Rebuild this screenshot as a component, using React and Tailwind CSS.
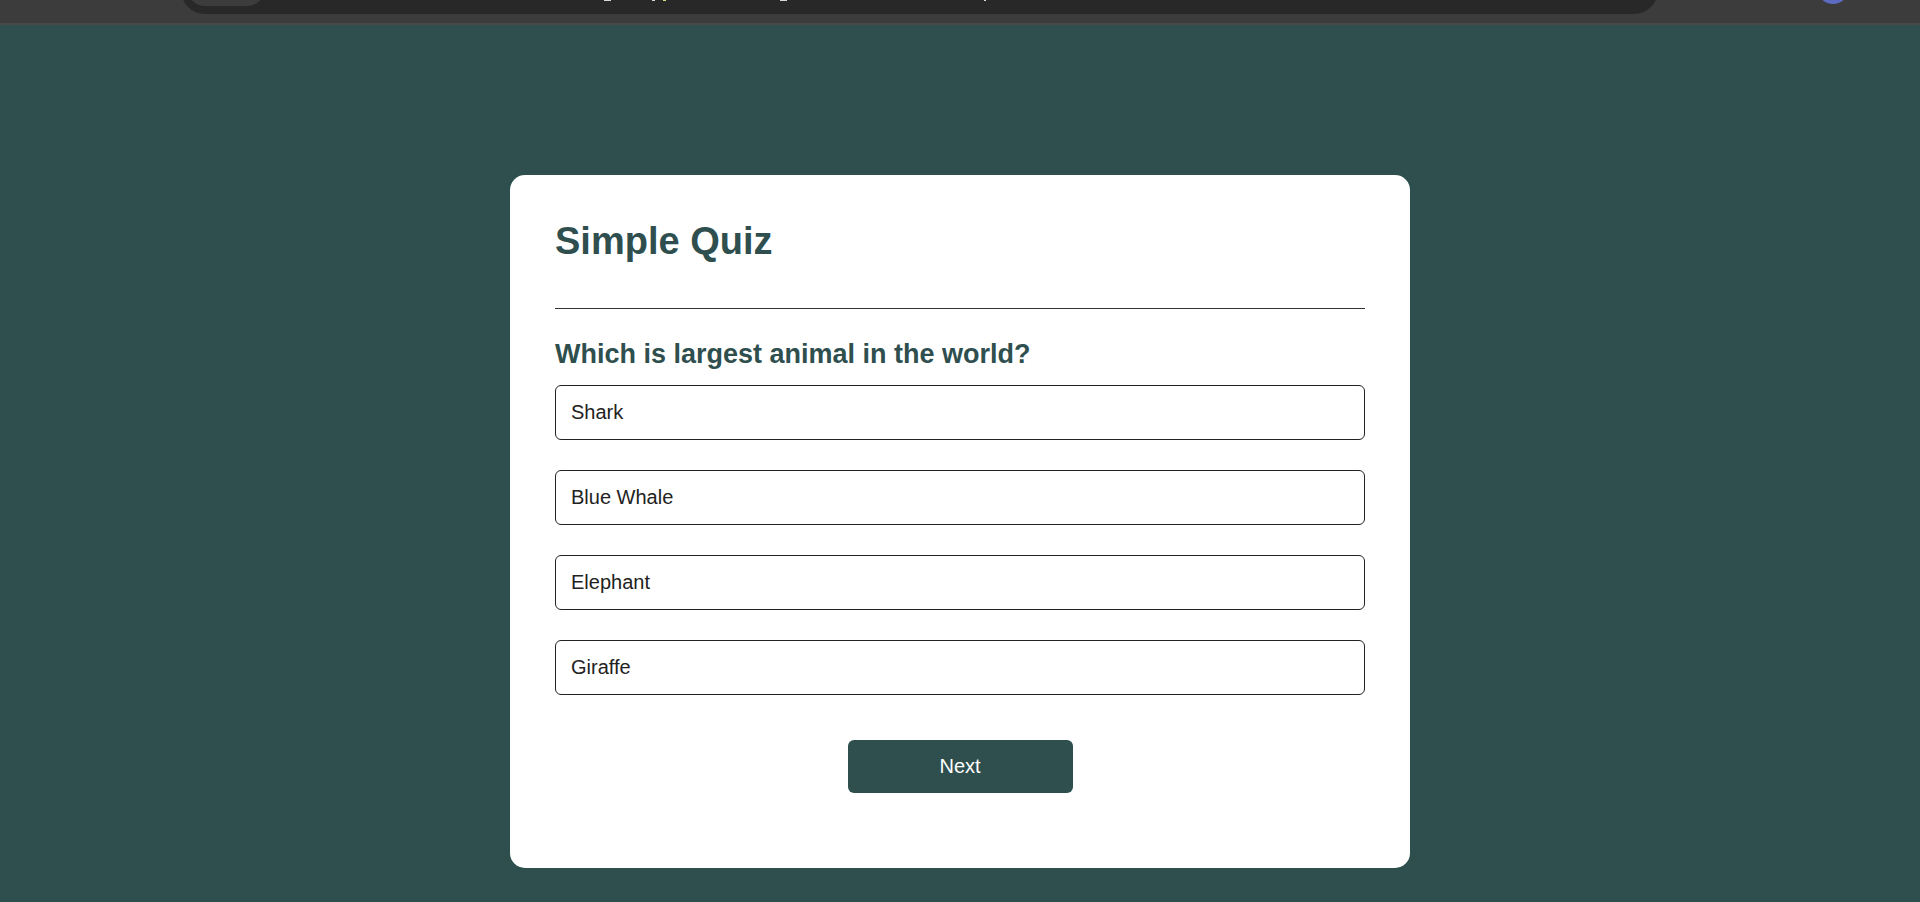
import { useState } from "react";

const answers = ["Shark", "Blue Whale", "Elephant", "Giraffe"];

function BrowserBar() {
  return (
    <div
      aria-hidden="true"
      className="flex h-[25px] items-end overflow-hidden border-b-2 border-[#484848] bg-[#3c3c3c] pb-[9px] pl-[181px]"
    >
      <div className="flex h-12 flex-1 shrink-0 items-end rounded-full bg-[#282828] pb-2 pl-[6px]">
        <div className="h-9 w-[78px] rounded-full bg-[#3c3c3c]" />
        <svg className="mb-[5px] ml-[339px] h-px w-[382px]" viewBox="0 0 382 1" fill="#d8d8d8">
          <rect x="0" width="7" height="1" />
          <rect x="48" width="3" height="1" />
          <rect x="59" width="3" height="1" fill="#d9d98a" />
          <rect x="176" width="7" height="1" />
          <rect x="380" width="2" height="1" />
        </svg>
      </div>
      <div className="flex w-[262px] justify-end pr-[71px] pb-[10px]">
        <div className="size-8 rounded-full bg-[#5c6bc0]" />
      </div>
    </div>
  );
}

export default function App() {
  const [selected, setSelected] = useState(null);

  return (
    <div className="flex min-h-screen flex-col bg-[#2f4f4f] font-['Liberation_Sans',Arial,sans-serif]">
      <BrowserBar />
      <main className="mx-auto mt-[150px] mb-8 w-full max-w-[900px] rounded-[15px] bg-white px-[45px] pt-[45px] pb-[75px]">
        <h1 className="border-b border-[#333333] pb-[45px] text-[38px] leading-[43px] font-bold text-[#2f4f4f]">
          Simple Quiz
        </h1>
        <section className="pt-[30px]">
          <h2 className="text-[27px] leading-[30px] font-bold text-[#2f4f4f]">
            Which is largest animal in the world?
          </h2>
          <div className="mt-4 flex flex-col gap-[30px]">
            {answers.map((answer) => (
              <button
                key={answer}
                type="button"
                aria-pressed={selected === answer}
                onClick={() => setSelected(answer)}
                className="w-full cursor-pointer rounded-md border border-[#222222] bg-white px-[15px] py-[15px] text-left text-xl leading-[23px] text-[#222222]"
              >
                {answer}
              </button>
            ))}
          </div>
          <button
            type="button"
            className="mx-auto mt-[45px] block w-[225px] cursor-pointer rounded-md bg-[#2f4f4f] py-[15px] text-xl leading-[23px] text-white"
          >
            Next
          </button>
        </section>
      </main>
    </div>
  );
}
